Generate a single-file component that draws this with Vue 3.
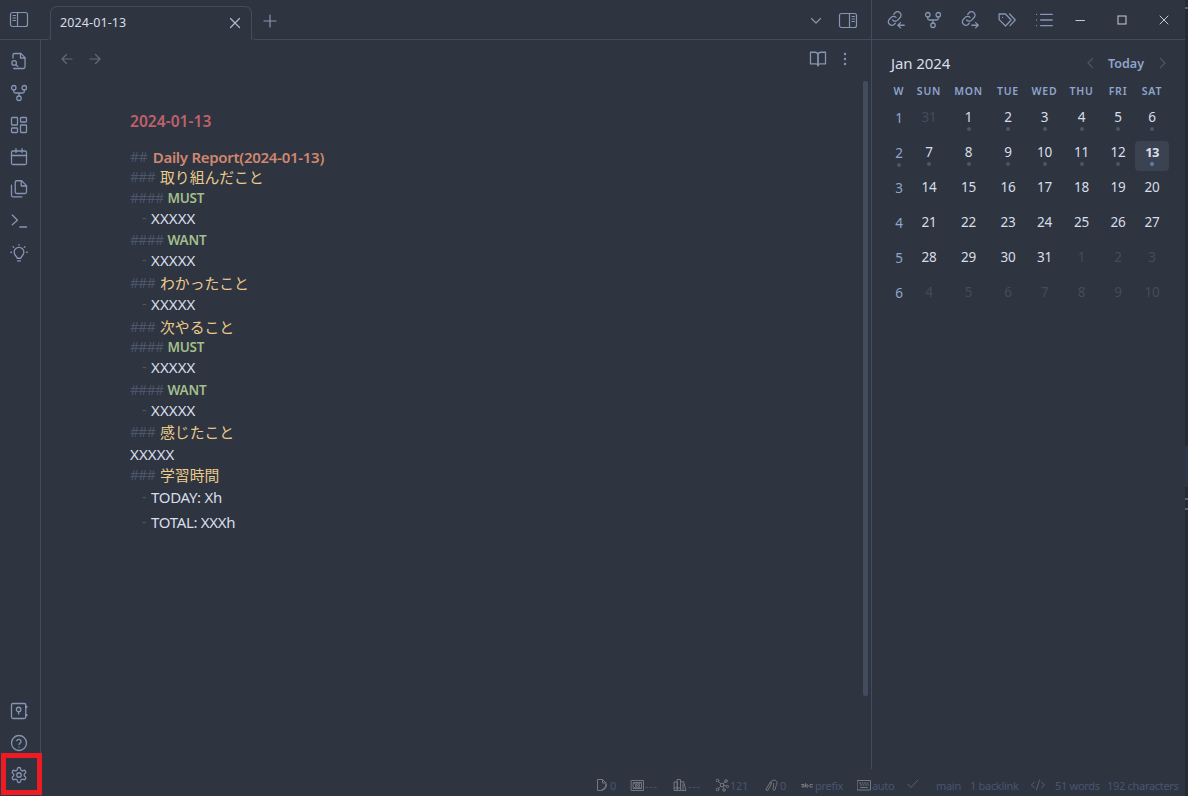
<template>
    <div class="app">
        <div class="workspace">
            <aside class="ribbon">
                <div class="ribbon-toggle">
                    <svg class="icon wide" viewBox="0 0 20 18">
                        <rect x="1.5" y="1.5" width="17" height="14" rx="2" />
                        <path d="M8.5 1.5v14M4 4.5h2.5M4 7h2.5M4 9.500h2.5" />
                    </svg>
                </div>
                <div class="ribbon-body">
                    <div class="ribbon-group">
                        <svg v-for="name in ribbonTop" :key="name" class="icon" viewBox="0 0 24 24">
                            <path v-for="d in icons[name]" :key="d" :d="d" />
                        </svg>
                    </div>
                    <div class="ribbon-group">
                        <svg v-for="name in ribbonBottom" :key="name" class="icon" viewBox="0 0 24 24">
                            <path v-for="d in icons[name]" :key="d" :d="d" />
                        </svg>
                    </div>
                </div>
                <div class="highlight"></div>
            </aside>

            <main class="editor">
                <header class="tabs">
                    <div class="tab-lead"></div>
                    <div class="tab">
                        <span class="tab-title">2024-01-13</span>
                        <svg class="tab-close" viewBox="0 0 12 12"><path d="M1.5 1.5l9 9M10.5 1.5l-9 9" /></svg>
                    </div>
                    <div class="tab-rest">
                        <svg class="plus" viewBox="0 0 14 14"><path d="M7 1v12M1 7h12" /></svg>
                        <svg class="chevron" viewBox="0 0 12 12"><path d="M1.5 3.5L6 8l4.5-4.5" /></svg>
                        <svg class="icon wide" viewBox="0 0 20 18">
                            <rect x="1.5" y="2.5" width="17" height="14" rx="2" />
                            <path d="M11.5 2.5v14M14 5.5h2.5M14 8h2.5M14 10.5h2.5" />
                        </svg>
                    </div>
                </header>
                <div class="view-header">
                    <svg class="arrow" viewBox="0 0 12 12"><path d="M11 6H1M5.5 1.5L1 6l4.5 4.5" /></svg>
                    <svg class="arrow" viewBox="0 0 12 12"><path d="M1 6h10M6.5 1.5L11 6l-4.5 4.5" /></svg>
                    <svg class="icon book" viewBox="0 0 24 24">
                        <path v-for="d in icons.book" :key="d" :d="d" />
                    </svg>
                    <svg class="more" viewBox="0 0 4 14">
                        <circle cx="2" cy="2" r="1.2" /><circle cx="2" cy="7" r="1.2" /><circle cx="2" cy="12" r="1.2" />
                    </svg>
                </div>
                <div class="document">
                    <h1>2024-01-13</h1>
                    <div
                        v-for="(line, i) in lines"
                        :key="i"
                        class="line"
                        :class="line.type"
                        :style="{ marginTop: line.gap + 'px' }"
                    >
                        <span v-if="marks[line.type]" class="mark">{{ marks[line.type] }}</span>
                        <span class="text" :class="{ filler: line.text === 'XXXXX' }">{{ line.text }}</span>
                    </div>
                    <div class="scrollbar"></div>
                </div>
            </main>

            <aside class="sidebar">
                <header class="side-header">
                    <svg v-for="name in sideTabs" :key="name" class="icon" viewBox="0 0 24 24">
                        <path v-for="d in icons[name]" :key="d" :d="d" />
                    </svg>
                    <div class="window-controls">
                        <svg viewBox="0 0 10 10"><path d="M1 5.5h8.5" /></svg>
                        <svg viewBox="0 0 10 10"><rect x="1" y="1" width="8" height="8" /></svg>
                        <svg viewBox="0 0 10 10"><path d="M1 1l8 8M9 1L1 9" /></svg>
                    </div>
                </header>
                <div class="calendar">
                    <div class="nav">
                        <span class="month">Jan 2024</span>
                        <svg class="nav-arrow" viewBox="0 0 8 12"><path d="M6.5 1.5L2 6l4.5 4.5" /></svg>
                        <span class="today">Today</span>
                        <svg class="nav-arrow" viewBox="0 0 8 12"><path d="M1.5 1.5L6 6l-4.5 4.5" /></svg>
                    </div>
                    <div class="grid names">
                        <span v-for="name in dayNames" :key="name">{{ name }}</span>
                    </div>
                    <div v-for="(week, w) in weeks" :key="w" class="grid week">
                        <div class="day week-num">
                            {{ w + 1 }}
                            <i v-if="w === 1" class="dot"></i>
                        </div>
                        <div
                            v-for="day in week"
                            :key="day.n"
                            class="day"
                            :class="{ outside: day.outside, active: day.active }"
                        >
                            {{ day.n }}
                            <i v-if="day.dot" class="dot"></i>
                        </div>
                    </div>
                </div>
            </aside>
        </div>

        <footer class="status">
            <span>
                <svg viewBox="0 0 14 14"><path d="M6 12.5H2.5v-11h5L11 5M7.5 1.5V5H11" /><path class="heavy" d="M11 6.5c.5 2-1.500 4.500-4 5.500" /></svg>
                <b>0</b>
            </span>
            <span>
                <svg viewBox="0 0 14 14"><path d="M1.500 2.500h12v10h-12zM3.500 4.500l7.500 6M11 4.500l-7.500 6M3.500 4.500h8v6h-8z" /><circle cx="7.500" cy="7.500" r="2" /></svg>
                <b class="dashes">---</b>
            </span>
            <span>
                <svg viewBox="0 0 14 14"><path d="M1.500 4h3v8.500h-3zM4.500 1.500h3v11h-3zM8 4l2.500-.5 2.500 9H8zM1.500 10h6M10 6v6" /></svg>
                <b class="dashes">---</b>
            </span>
            <span>
                <svg viewBox="0 0 14 14"><circle cx="7" cy="7" r="1.8" /><circle cx="2.5" cy="2.5" r="1.3" /><circle cx="11" cy="3" r="1.3" /><circle cx="2.5" cy="11.5" r="1.3" /><circle cx="9" cy="12" r="1.3" /><circle cx="12.5" cy="8.5" r="1.1" /><path d="M3.5 3.5l2 2M10 4L8.5 5.5M3.5 10.5l2-2M8 8.5l.5 2M9 7.5l2.5.5" /></svg>
                <b>121</b>
            </span>
            <span>
                <svg viewBox="0 0 14 14"><path d="M1 11.500l4-7 1.500 1-3.500 6.500zM6 5c0-4 6-4 6 0 0 2.500-1.500 3-1.500 5 0 3-3 3-2.500.5.500-2 .5-3 .5-5M5 4.500L7 3" /></svg>
                <b>0</b>
            </span>
            <span>
                <svg viewBox="0 0 14 14"><path d="M1.5 6.500h2.500v2.500H2V8h2M5.500 5.500V9H8V7H5.500M12.500 6.500H10V9h2.500" /></svg>
                <b>prefix</b>
            </span>
            <span>
                <svg viewBox="0 0 14 14"><path d="M.5 2.5h13v9.500H.5zM2.5 5h1M5 5h1M7.5 5h1M10 5h1M3.5 7h1M6 7h1M8.5 7h1M11 7h.5M3.5 9.5h7" /></svg>
                <b>auto</b>
            </span>
            <span><svg class="thin" viewBox="0 0 14 14"><path d="M2.5 6L6 9.500l7-7.5" /></svg></span>
            <span><b>main</b></span>
            <span><b>1 backlink</b></span>
            <span><svg class="thin code" viewBox="0 0 16 14"><path d="M4.5 4L1.5 7l3 3M11.5 4l3 3-3 3M9.5 2l-3 10" /></svg></span>
            <span><b>51 words</b></span>
            <span><b>192 characters</b></span>
        </footer>

        <div class="edge">
            <i class="edge-tick first"></i>
            <i class="edge-thumb"></i>
            <i class="edge-tick second"></i>
            <i class="edge-tick third"></i>
        </div>
    </div>
</template>

<script setup>
const link = [
    'M7.500 12a4.500 4.500 0 0 0 6.500.5l4-4.500a4.700 4.700 0 0 0-7-6l-2 2.500',
    'M12 8.500A4.500 4.500 0 0 0 5.500 8.500L2.500 12a4.700 4.700 0 0 0 7 6l1.500-1.700',
]

const icons = {
    search: ['M4 8V4a2 2 0 0 1 2-2h8.5L20 7.5V20a2 2 0 0 1-2 2H5', 'M14 2v6h6', 'M8.5 14.5a3 3 0 1 1-6 0a3 3 0 1 1 6 0', 'M8 17l2.5 2.5'],
    graph: ['M8 5a3 3 0 1 1-6 0a3 3 0 1 1 6 0', 'M22 5a3 3 0 1 1-6 0a3 3 0 1 1 6 0', 'M15 19a3 3 0 1 1-6 0a3 3 0 1 1 6 0', 'M5 8v2q0 2 2 2h10q2 0 2-2V8M12 12v4'],
    canvas: ['M3 2h6q1 0 1 1v8q0 1-1 1H3q-1 0-1-1V3q0-1 1-1z', 'M15 2h6q1 0 1 1v4q0 1-1 1h-6q-1 0-1-1V3q0-1 1-1z', 'M15 12h6q1 0 1 1v8q0 1-1 1h-6q-1 0-1-1v-8q0-1 1-1z', 'M3 16h6q1 0 1 1v4q0 1-1 1H3q-1 0-1-1v-4q0-1 1-1z'],
    calendar: ['M4 4h16a2 2 0 0 1 2 2v14a2 2 0 0 1-2 2H4a2 2 0 0 1-2-2V6a2 2 0 0 1 2-2z', 'M2 10h20M8 1v5M16 1v5'],
    files: ['M15.5 1H9a2 2 0 0 0-2 2v13a2 2 0 0 0 2 2h11a2 2 0 0 0 2-2V7.5L15.5 1z', 'M15 1v7h7', 'M2 7v13.5A2 2 0 0 0 4 22.5h12'],
    terminal: ['M3 17l7-6-7-7', 'M13 20h9'],
    bulb: ['M9.5 19c0-2.5-4-4-4-8a6.5 6.5 0 0 1 13 0c0 4-4 5.5-4 8z', 'M10 22.5h4M12 1v.5M4 3.5l1 1M20 3.5l-1 1M1 11h1M22 11h1'],
    vault: ['M4 2h15a2 2 0 0 1 2 2v16a2 2 0 0 1-2 2H4a2 2 0 0 1-2-2V4q0-2 2-2z', 'M14.5 10a3 3 0 1 1-6 0a3 3 0 1 1 6 0M11.5 13v3M21 6h1.5v1H21M21 17h1.5v1H21'],
    help: ['M22 12a10 10 0 1 1-20 0a10 10 0 1 1 20 0', 'M9 9a3 3 0 0 1 5.8 1c0 2-2.8 2.5-2.8 4M12 17.5h.01'],
    settings: ['M12.22 2h-.44a2 2 0 0 0-2 2v.18a2 2 0 0 1-1 1.73l-.43.25a2 2 0 0 1-2 0l-.15-.08a2 2 0 0 0-2.73.73l-.22.38a2 2 0 0 0 .73 2.73l.15.1a2 2 0 0 1 1 1.72v.51a2 2 0 0 1-1 1.74l-.15.09a2 2 0 0 0-.73 2.73l.22.38a2 2 0 0 0 2.73.73l.15-.08a2 2 0 0 1 2 0l.43.25a2 2 0 0 1 1 1.73V20a2 2 0 0 0 2 2h.44a2 2 0 0 0 2-2v-.18a2 2 0 0 1 1-1.73l.43-.25a2 2 0 0 1 2 0l.15.08a2 2 0 0 0 2.73-.73l.22-.39a2 2 0 0 0-.73-2.73l-.15-.08a2 2 0 0 1-1-1.74v-.5a2 2 0 0 1 1-1.74l.15-.09a2 2 0 0 0 .73-2.73l-.22-.38a2 2 0 0 0-2.73-.73l-.15.08a2 2 0 0 1-2 0l-.43-.25a2 2 0 0 1-1-1.73V4a2 2 0 0 0-2-2z', 'M15 12a3 3 0 1 1-6 0a3 3 0 1 1 6 0'],
    book: ['M2 3h6a4 4 0 0 1 4 3v15a3 3 0 0 0-3-2.5H2z', 'M22 3h-6a4 4 0 0 0-4 3v15a3 3 0 0 1 3-2.5h7z'],
    backlinks: [...link, 'M23 19h-8M18 15.500L14.5 19l3.500 3.500'],
    outlinks: [...link, 'M14.5 19h8M19.5 15.500L23 19l-3.5 3.5'],
    tags: ['M1.5 4H10L17.5 12l-7.5 8-8.5-8.5z', 'M15.5 4L23 12l-7 7.5', 'M6 8.5h.01'],
    list: ['M7.5 4.5H23M7.5 12H23M7.5 19.5H23', 'M2 4.5h.01M2 12h.01M2 19.5h.01'],
}

const ribbonTop = ['search', 'graph', 'canvas', 'calendar', 'files', 'terminal', 'bulb']
const ribbonBottom = ['vault', 'help', 'settings']
const sideTabs = ['backlinks', 'graph', 'outlinks', 'tags', 'list']

const marks = { h2: '##', h3: '###', h4: '####', li: '-' }

const lines = [
    { type: 'h2', text: 'Daily Report(2024-01-13)', gap: 0 },
    { type: 'h3', text: '取り組んだこと', gap: 0 },
    { type: 'h4', text: 'MUST', gap: 1 },
    { type: 'li', text: 'XXXXX', gap: 0 },
    { type: 'h4', text: 'WANT', gap: 2 },
    { type: 'li', text: 'XXXXX', gap: 0 },
    { type: 'h3', text: 'わかったこと', gap: 3 },
    { type: 'li', text: 'XXXXX', gap: 1 },
    { type: 'h3', text: '次やること', gap: 3 },
    { type: 'h4', text: 'MUST', gap: 0 },
    { type: 'li', text: 'XXXXX', gap: 0 },
    { type: 'h4', text: 'WANT', gap: 3 },
    { type: 'li', text: 'XXXXX', gap: 0 },
    { type: 'h3', text: '感じたこと', gap: 2 },
    { type: 'p', text: 'XXXXX', gap: 2 },
    { type: 'h3', text: '学習時間', gap: 1 },
    { type: 'li', text: 'TODAY: Xh', gap: 2 },
    { type: 'li', text: 'TOTAL: XXXh', gap: 5 },
]

const dayNames = ['W', 'SUN', 'MON', 'TUE', 'WED', 'THU', 'FRI', 'SAT']

// six weeks, starting on Sunday Dec 31
const weeks = Array.from({ length: 6 }, (_, w) =>
    Array.from({ length: 7 }, (_, d) => {
        const i = w * 7 + d
        return {
            n: i === 0 ? 31 : i > 31 ? i - 31 : i,
            outside: i === 0 || i > 31,
            active: i === 13,
            dot: i > 0 && i < 14,
        }
    })
)
</script>

<style>
body {
    margin: 0;
    background: #2e3440;
}
</style>

<style scoped>
.app {
    position: relative;
    width: 1188px;
    height: 796px;
    overflow: hidden;
    box-sizing: border-box;
    background: #2e3440;
    color: #d8dee9;
    font-family: "Noto Sans", "Noto Sans CJK JP", sans-serif;
}
.app * {
    box-sizing: border-box;
}
.workspace {
    display: flex;
    height: 769px;
    padding-right: 3px;
}
svg {
    fill: none;
    stroke: #8695b3;
    stroke-width: 1.2;
    stroke-linecap: round;
    stroke-linejoin: round;
    flex: none;
    display: block;
}
.icon {
    width: 18px;
    height: 18px;
    stroke-width: 1.7;
}
.icon.wide {
    width: 20px;
    stroke-width: 1.2;
}
.ribbon {
    position: relative;
    width: 41px;
    height: 796px;
    display: flex;
    flex-direction: column;
    flex: none;
}
.ribbon-toggle {
    height: 40px;
    padding: 11px 0 0 9px;
    border-bottom: 1px solid #434c5e;
}
.ribbon-body {
    flex: 1;
    display: flex;
    flex-direction: column;
    justify-content: space-between;
    padding: 12px 0 12px 10px;
    border-right: 1px solid #434c5e;
}
.ribbon-group {
    display: flex;
    flex-direction: column;
    gap: 14px;
}
.highlight {
    position: absolute;
    left: 1px;
    top: 753px;
    width: 41px;
    height: 42px;
    border: 5px solid #ed1c24;
    z-index: 2;
}
.editor {
    flex: 1;
    min-width: 0;
}
.tabs {
    display: flex;
    height: 40px;
}
.tab-lead {
    width: 9px;
    border-bottom: 1px solid #434c5e;
    border-bottom-right-radius: 4px;
}
.tab {
    display: flex;
    align-items: center;
    justify-content: space-between;
    width: 202px;
    height: 34px;
    margin-top: 6px;
    padding: 0 10px 2px 9px;
    border: 1px solid #434c5e;
    border-bottom: 0;
    border-radius: 7px 7px 0 0;
}
.tab-title {
    font-size: 12.5px;
    letter-spacing: 0.1px;
}
.tab-close {
    width: 12px;
    height: 12px;
    stroke: #b0bbd0;
}
.tab-rest {
    flex: 1;
    display: flex;
    align-items: center;
    padding-right: 13px;
    border-bottom: 1px solid #434c5e;
    border-bottom-left-radius: 4px;
}
.plus {
    width: 14px;
    height: 14px;
    margin-left: 11px;
    margin-top: 2px;
}
.chevron {
    width: 12px;
    height: 12px;
    margin: 2px 16px 0 auto;
}
.view-header {
    display: flex;
    align-items: center;
    height: 40px;
    padding: 0 24px 2px 20px;
}
.arrow {
    width: 12px;
    height: 12px;
    margin-right: 16px;
    stroke: #606b81;
}
.book {
    margin: 0 16px 0 auto;
}
.more {
    width: 4px;
    height: 14px;
    fill: #8695b3;
    stroke: none;
}
.document {
    position: relative;
    padding: 31px 0 0 89px;
    height: 689px;
}
h1 {
    margin: 0 0 18px;
    height: 18px;
    line-height: 20px;
    font-size: 15.5px;
    font-weight: 600;
    letter-spacing: 0.05px;
    color: #bf616a;
}
.line {
    display: flex;
    height: 20px;
    line-height: 20px;
    font-size: 15px;
    white-space: pre;
}
.mark {
    margin-right: 5px;
    color: #4c566a;
    font-size: 14px;
    letter-spacing: -0.7px;
}
.h2 .text {
    color: #d08770;
    font-weight: 600;
    letter-spacing: -0.28px;
}
.h2 .mark {
    letter-spacing: -0.2px;
}
.h3 .text {
    color: #ebcb8b;
    font-size: 14.8px;
}
.h4 .text {
    color: #a3be8c;
    font-size: 13.5px;
    font-weight: 600;
    letter-spacing: -0.2px;
}
.h4 .mark {
    margin-right: 4px;
}
.li .mark {
    width: 5px;
    margin-left: 12px;
    margin-right: 4px;
}
.li .text,
.p .text {
    letter-spacing: -0.3px;
}
.line .filler {
    letter-spacing: 0.1px;
}
.scrollbar {
    position: absolute;
    right: 3px;
    top: 1px;
    width: 5px;
    height: 615px;
    background: #434c5e;
    border-radius: 2px;
}
.sidebar {
    width: 314px;
    flex: none;
    border-left: 1px solid #434c5e;
}
.side-header {
    display: flex;
    align-items: center;
    gap: 19px;
    height: 40px;
    padding-left: 15px;
    border-bottom: 1px solid #434c5e;
}
.window-controls {
    display: flex;
    gap: 32px;
    margin-left: 3px;
}
.window-controls svg {
    width: 10px;
    height: 10px;
    stroke: #c8ccd3;
    stroke-width: 1;
    stroke-linejoin: miter;
}
.calendar {
    padding: 13px 16px 0;
}
.nav {
    display: flex;
    align-items: center;
    height: 20px;
    padding: 0 2px 0 3px;
}
.month {
    font-size: 15px;
    letter-spacing: -0.1px;
}
.nav-arrow {
    width: 8px;
    height: 12px;
    stroke: #4c566a;
}
.nav-arrow:first-of-type {
    margin-left: auto;
}
.today {
    margin: 0 15px 0 14px;
    font-size: 12.5px;
    font-weight: 600;
    color: #8fa5cc;
}
.grid {
    display: grid;
    grid-template-columns: 22px 38px 41px 38px 35px 39px 34px 34px;
    text-align: center;
}
.names {
    height: 33px;
    padding-top: 9px;
    color: #8fa5cc;
    font-size: 10.5px;
    font-weight: 600;
    line-height: 18px;
    letter-spacing: 0.8px;
}
.week {
    height: 35px;
}
.day {
    position: relative;
    height: 30px;
    padding-top: 1px;
    font-size: 13.5px;
    line-height: 21px;
    letter-spacing: -0.15px;
    border-radius: 4px;
}
.week-num {
    top: 1px;
    color: #8fa5cc;
}
.outside {
    color: #434c5e;
}
.active {
    background: #3b4252;
    font-size: 13px;
    font-weight: 700;
    letter-spacing: -0.6px;
}
.dot {
    position: absolute;
    left: calc(50% - 2px);
    top: 21px;
    width: 4px;
    height: 4px;
    border-radius: 50%;
    background: #4c566a;
}
.active .dot {
    background: #5e81ac;
}
.status {
    display: grid;
    grid-template-columns: 35px 43px 42px 50px 35px 57px 48px 31px 34px 60px 25px 52px 80px;
    align-items: center;
    width: 591px;
    height: 26px;
    margin-left: 595px;
    padding-top: 6px;
}
.status span {
    display: flex;
    align-items: center;
    white-space: nowrap;
}
.status svg {
    width: 14px;
    height: 14px;
    margin-right: 1px;
    stroke: #74777d;
    stroke-width: 1;
}
.status .heavy {
    stroke-width: 1.8;
}
.status .thin {
    stroke: #56607a;
}
.status .code {
    width: 16px;
}
.status b {
    font-size: 11px;
    font-weight: 400;
    color: #4a5570;
    letter-spacing: -0.3px;
}
.status .dashes {
    letter-spacing: 0.7px;
}
.edge {
    position: absolute;
    right: 0;
    top: 0;
    width: 3px;
    height: 796px;
    background: #272b35;
}
.edge-tick {
    position: absolute;
    left: 0;
    width: 3px;
    height: 2px;
    background: #596273;
}
.first {
    top: 7px;
}
.second {
    top: 498px;
}
.third {
    top: 508px;
}
.edge-thumb {
    position: absolute;
    top: 446px;
    width: 3px;
    height: 41px;
    background: #2e3747;
}
</style>
